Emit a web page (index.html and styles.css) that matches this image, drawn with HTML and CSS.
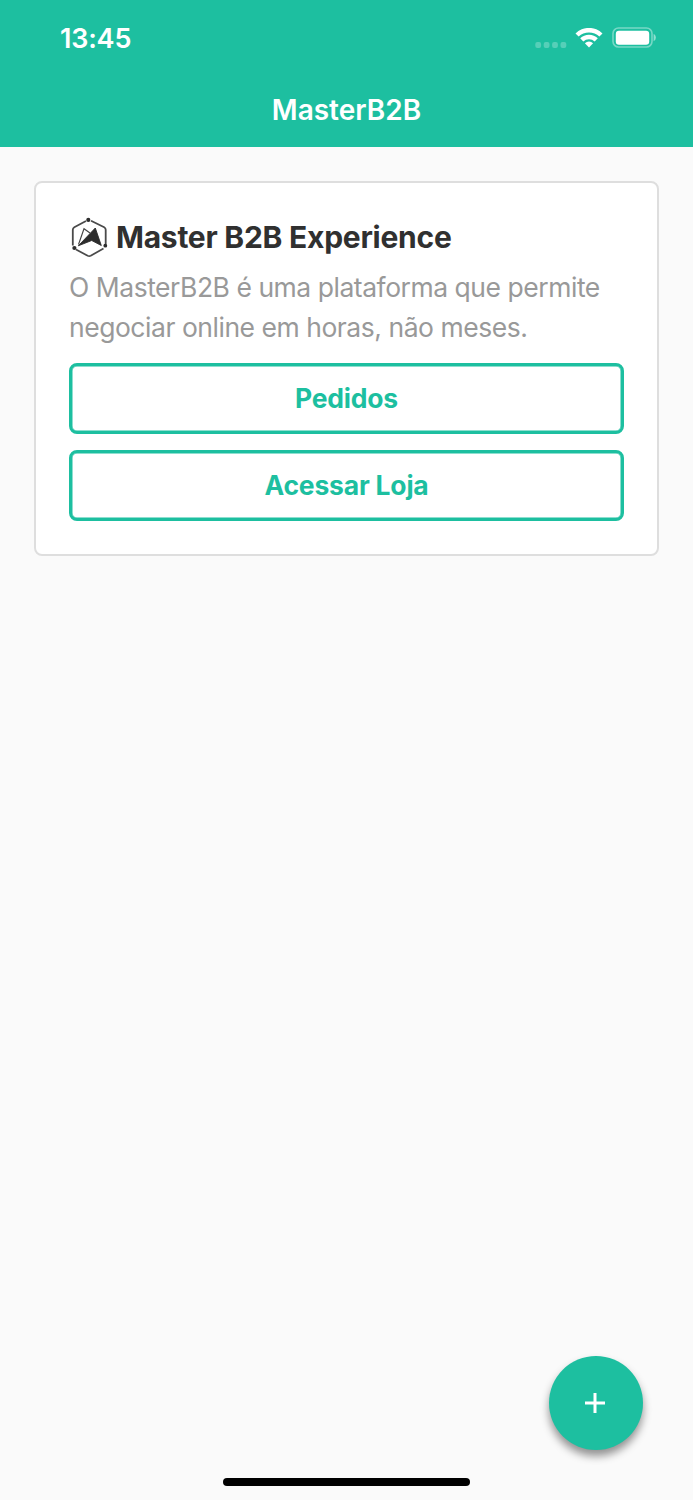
FILE: index.html
```
<!DOCTYPE html>
<html lang="pt-BR">
<head>
    <meta charset="UTF-8">
    <title>MasterB2B</title>
    <link rel="stylesheet" href="styles.css">
</head>
<body>
    <header class="header">
        <div class="status-bar">
            <span class="time">13:45</span>
            <div class="status-icons">
                <svg class="signal" width="32" height="6" viewBox="0 0 32 6">
                    <rect x="0.3" y="0" width="5.8" height="6" rx="2"/>
                    <rect x="8.7" y="0" width="5.8" height="6" rx="2"/>
                    <rect x="17.1" y="0" width="5.8" height="6" rx="2"/>
                    <rect x="25.5" y="0" width="5.8" height="6" rx="2"/>
                </svg>
                <svg class="wifi" width="28" height="20" viewBox="0 0 28 20">
                    <path d="M.5 5.4a19.3 19.3 0 0 1 27 0L24.4 8.600a15 15 0 0 0-20.800 0z"/>
                    <path d="M5.2 10.3a12.6 12.6 0 0 1 17.6 0L19.7 13.5a8.3 8.3 0 0 0-11.4 0z"/>
                    <path d="M9.9 15.2a6 6 0 0 1 8.200 0L14 19.5z"/>
                </svg>
                <svg class="battery" width="44" height="22" viewBox="0 0 44 22">
                    <rect class="battery-case" x="1" y="1" width="39" height="19" rx="5.5"/>
                    <rect x="3.8" y="3.8" width="33.4" height="14" rx="3.2"/>
                    <path class="battery-tip" d="M41.6 7c3 1.2 3 6 0 7.2z"/>
                </svg>
            </div>
        </div>
        <h1 class="header-title">MasterB2B</h1>
    </header>

    <main class="content">
        <section class="card">
            <div class="card-title">
                <svg class="logo" width="40" height="44" viewBox="0 0 40 44">
                    <path class="logo-hex" d="M17 5 5.3 11.2Q3.8 12.1 3.8 13.7V29.5M7 33.5 18.7 39.7Q20.2 40.4 21.7 39.7L34.5 32.5M36.7 28.5V13.7Q36.7 12.1 35.2 11.2L22 4.7"/>
                    <circle cx="19.3" cy="3.9" r="2.1"/>
                    <circle cx="5.4" cy="32" r="2.1"/>
                    <circle cx="36.3" cy="29.7" r="1.9"/>
                    <path class="logo-line" d="M9.5 28.500 15 12.700 21 17"/>
                    <path class="logo-arrow" d="M9.300 29.800 26.300 12 32.300 29.500 22.700 24.500z"/>
                </svg>
                <h2>Master B2B Experience</h2>
            </div>
            <p class="card-text">O MasterB2B é uma plataforma que permite<br>negociar online em horas, não meses.</p>
            <div class="actions">
                <button class="btn" type="button">Pedidos</button>
                <button class="btn" type="button">Acessar Loja</button>
            </div>
        </section>
    </main>

    <button class="fab" type="button" aria-label="Adicionar">
        <svg width="20" height="20" viewBox="0 0 20 20">
            <path d="M10 0v20M0 10h20"/>
        </svg>
    </button>
    <div class="home-indicator"></div>
</body>
</html>
```
FILE: styles.css
```
* {
    box-sizing: border-box;
}

body {
    margin: 0;
    height: 1500px;
    overflow: hidden;
    background-color: #fafafa;
    font-family: Inter, "Liberation Sans", sans-serif;
}

h1, h2, p {
    margin: 0;
}

svg {
    display: block;
}

/* Header */
.header {
    height: 147px;
    background-color: #1dbfa0;
    color: #fff;
}

.status-bar {
    display: flex;
    justify-content: space-between;
    height: 76px;
    padding: 0 37px 0 60px;
}

.time {
    font-size: 27px;
    font-weight: 600;
    line-height: 77px;
    letter-spacing: -0.2px;
}

.status-icons {
    display: flex;
    align-items: flex-start;
    fill: #fff;
}

.signal {
    margin: 42px 8px 0 0;
    opacity: 0.25;
}

.wifi {
    margin: 28px 9px 0 0;
}

.battery {
    margin-top: 27px;
}

.battery-case {
    fill: none;
    stroke: #fff;
    stroke-width: 1.6;
    opacity: 0.4;
}

.battery-tip {
    opacity: 0.5;
}

.header-title {
    font-size: 28px;
    font-weight: 570;
    line-height: 69px;
    text-align: center;
}

/* Card */
.content {
    padding: 34px;
}

.card {
    width: 625px;
    height: 375px;
    padding: 33px;
    border: 2px solid #dedede;
    border-radius: 8px;
    background-color: #fff;
}

.card-title {
    display: flex;
    align-items: flex-start;
    gap: 7px;
    height: 44px;
}

.logo {
    fill: #2d2d2d;
}

.logo-hex {
    fill: none;
    stroke: #4a4a4a;
    stroke-width: 1.8;
}

.logo-line {
    fill: none;
    stroke: #444;
    stroke-width: 1.1;
}

.logo-arrow {
    stroke: #2d2d2d;
    stroke-width: 0.9;
}

.card-title h2 {
    color: #303030;
    font-size: 30px;
    font-weight: 690;
    line-height: 42px;
    letter-spacing: -0.25px;
    white-space: nowrap;
}

.card-text {
    margin-top: 7px;
    color: #999;
    font-size: 26.5px;
    line-height: 40px;
    letter-spacing: -0.47px;
    white-space: nowrap;
}

.actions {
    display: grid;
    gap: 16px;
    margin-top: 16px;
}

.btn {
    height: 71px;
    padding: 0 0 1px;
    border: 3px solid #1dbfa0;
    border-radius: 8px;
    background: #fff;
    box-shadow: inset 0 0 0 0.5px #1dbfa0;
    color: #1dbfa0;
    font-family: inherit;
    font-size: 26.5px;
    font-weight: 650;
    letter-spacing: -0.2px;
    cursor: pointer;
}

/* Floating button */
.fab {
    position: absolute;
    left: 549px;
    top: 1356px;
    display: flex;
    align-items: center;
    justify-content: center;
    width: 94px;
    height: 94px;
    padding: 0 2px 1px 0;
    border: none;
    border-radius: 50%;
    background-color: #1dbfa0;
    box-shadow: 0 6px 9px rgba(0, 0, 0, 0.42);
    cursor: pointer;
}

.fab path {
    fill: none;
    stroke: #fff;
    stroke-width: 3;
}

.home-indicator {
    position: absolute;
    left: 223px;
    top: 1478px;
    width: 247px;
    height: 8px;
    border-radius: 4px;
    background-color: #000;
}
```
